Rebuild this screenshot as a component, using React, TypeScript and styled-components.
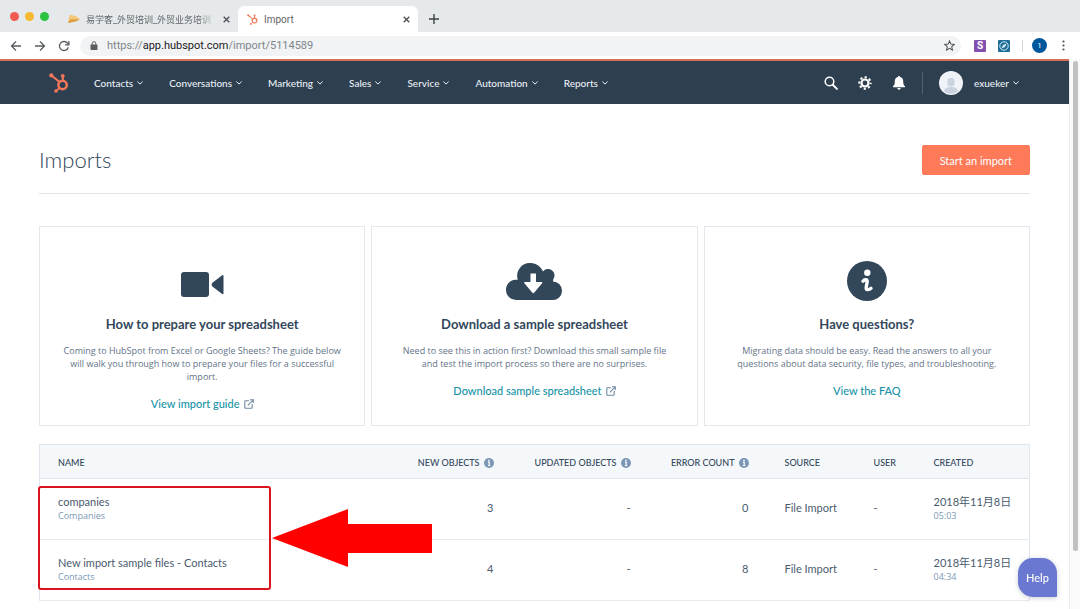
import React from 'react';
import styled, { createGlobalStyle } from 'styled-components';

const ui = 'Lato, "Noto Sans CJK SC", sans-serif';
const smallPrint = '"Open Sans", "Noto Sans CJK SC", sans-serif';
const chromeFont = 'Roboto, "Noto Sans CJK SC", sans-serif';

const GlobalStyle = createGlobalStyle`
  * { box-sizing: border-box; }
  body { margin: 0; font-family: ${ui}; color: #33475b; background: #fff; }
  button { font: inherit; color: inherit; border: 0; padding: 0; background: none; cursor: pointer; }
  a { text-decoration: none; }
  svg { display: block; flex: none; }
`;

const Window = styled.div`
  display: flex;
  flex-direction: column;
  height: 100vh;
  overflow: hidden;
`;

const TabStrip = styled.div`
  display: flex;
  align-items: flex-end;
  height: 32px;
  flex: none;
  padding-left: 10px;
  background: #e5e9eb;
  font-family: ${chromeFont};
  font-size: 10px;
  color: #5f6367;
`;

const Lights = styled.div`
  display: flex;
  gap: 6px;
  height: 32px;
  align-items: center;
`;

const Light = styled.span<{ $color: string }>`
  width: 9px;
  height: 9px;
  border-radius: 50%;
  background: ${(p) => p.$color};
`;

const Tab = styled.div<{ $active?: boolean }>`
  display: flex;
  align-items: center;
  gap: 6px;
  height: 26px;
  width: ${(p) => (p.$active ? 180 : 189)}px;
  padding: 0 8px 0 ${(p) => (p.$active ? 9 : 19)}px;
  border-radius: 6px 6px 0 0;
  background: ${(p) => (p.$active ? '#fff' : 'transparent')};
`;

const TabTitle = styled.span<{ $fade?: boolean }>`
  flex: 1;
  min-width: 0;
  overflow: hidden;
  white-space: nowrap;
  ${(p) => p.$fade && 'font-size: 9px; mask-image: linear-gradient(90deg, #000 85%, transparent);'}
`;

const IconButton = styled.button`
  display: flex;
  align-items: center;
  justify-content: center;
`;

const NewTab = styled(IconButton)`
  width: 32px;
  height: 26px;
`;

const Toolbar = styled.div`
  display: flex;
  align-items: center;
  height: 27px;
  flex: none;
  padding: 0 15px 0 9px;
  background: #fff;
  font-family: ${chromeFont};
`;

const NavButtons = styled.div`
  display: flex;
  gap: 10px;
  margin-right: 9px;
`;

const AddressBar = styled.div`
  flex: 1;
  display: flex;
  align-items: center;
  gap: 9px;
  height: 20px;
  padding: 0 6px 0 10px;
  border-radius: 10px;
  background: #f1f3f4;
`;

const Url = styled.span`
  flex: 1;
  font-size: 11px;
  color: #80868b;
  b { font-weight: 400; color: #202124; }
`;

const Extensions = styled.div`
  display: flex;
  align-items: center;
  gap: 12px;
  margin-left: 13px;
`;

const Badge = styled.span`
  display: flex;
  align-items: center;
  justify-content: center;
  width: 12px;
  height: 12px;
  border-radius: 1px;
  background: #8450b0;
  color: #fff;
  font-size: 10px;
  font-weight: 700;
`;

const ProfileArea = styled.div`
  display: flex;
  align-items: center;
  gap: 9px;
  margin-right: 3px;
`;

const Profile = styled(IconButton)`
  width: 15px;
  height: 15px;
  border-radius: 50%;
  background: #01579b;
  color: #fff;
  font-size: 8px;
`;

const Divider = styled.span<{ $h: number; $color: string }>`
  width: 1px;
  height: ${(p) => p.$h}px;
  background: ${(p) => p.$color};
`;

const Viewport = styled.div`
  flex: 1;
  min-height: 0;
  display: flex;
`;

const Page = styled.div`
  flex: 1;
  min-width: 0;
  overflow: hidden;
`;

const Scrollbar = styled.div`
  width: 11px;
  padding: 2px 2px 0 3px;
  background: #fafafa;
  border-left: 1px solid #ececec;
`;

const Thumb = styled.div`
  height: 490px;
  max-height: 90%;
  border-radius: 3px;
  background: #c1c1c1;
`;

const GlobalNav = styled.nav`
  display: flex;
  align-items: center;
  height: 45px;
  padding: 0 50px 0 49px;
  border-top: 2px solid #d9705e;
  background: #2e3f50;
  color: #eaf0f6;
  font-size: 10px;
  font-weight: 500;
`;

const Menu = styled.div`
  flex: 1;
  display: flex;
  gap: 26px;
  margin-left: 25px;
`;

const MenuButton = styled.button`
  display: flex;
  align-items: center;
  gap: 4px;
  white-space: nowrap;
`;

const Tools = styled.div`
  display: flex;
  align-items: center;
  gap: 16px;
`;

const ToolIcons = styled.div`
  display: flex;
  align-items: center;
  gap: 20px;
`;

const Account = styled.div`
  display: flex;
  align-items: center;
  gap: 11px;
`;

const Main = styled.main`
  padding: 41px 39px 0;
`;

const Header = styled.header`
  display: flex;
  align-items: center;
  justify-content: space-between;
  padding-bottom: 18px;
  border-bottom: 1px solid #dfe3eb;
  margin-bottom: 32px;
`;

const Title = styled.h1`
  margin: 0;
  font-size: 22px;
  line-height: 30px;
  font-weight: 300;
`;

const Primary = styled.button`
  height: 30px;
  padding: 0 18px;
  border-radius: 2px;
  background: #ff7a59;
  color: #fff;
  font-size: 11px;
`;

const Cards = styled.section`
  display: grid;
  grid-template-columns: repeat(3, 1fr);
  gap: 6px;
  margin-bottom: 18px;
`;

const Card = styled.article`
  display: flex;
  flex-direction: column;
  align-items: center;
  min-height: 200px;
  padding: 31px 20px 0;
  border: 1px solid #e3e7ee;
  text-align: center;
`;

const CardIcon = styled.div`
  display: flex;
  align-items: center;
  height: 46px;
`;

const CardTitle = styled.h2`
  margin: 11px 0;
  font-size: 13px;
  line-height: 18px;
  font-weight: 700;
`;

const CardText = styled.p`
  margin: 0 0 14px;
  font-family: ${smallPrint};
  font-size: 9px;
  line-height: 13px;
  color: #637387;
`;

const CardLink = styled.a`
  display: flex;
  align-items: center;
  gap: 4px;
  font-size: 11px;
  line-height: 14px;
  font-weight: 500;
  color: #1793a6;
`;

const TableWrap = styled.section`
  position: relative;
`;

const Table = styled.table`
  width: 100%;
  table-layout: fixed;
  border-collapse: collapse;
  border: 1px solid #dfe6ee;
  font-size: 11px;
`;

const Col = styled.col<{ $w?: number }>`
  width: ${(p) => (p.$w ? `${p.$w}px` : 'auto')};
`;

const Th = styled.th`
  height: 34px;
  padding: 2px 18px 0;
  background: #f5f8fa;
  border-bottom: 1px solid #dfe6ee;
  font-size: 9px;
  font-weight: 500;
  text-align: left;
  white-space: nowrap;
`;

const HeadLabel = styled.span<{ $right?: boolean }>`
  display: flex;
  align-items: center;
  justify-content: ${(p) => (p.$right ? 'flex-end' : 'flex-start')};
  gap: 4px;
`;

const Td = styled.td<{ $right?: boolean }>`
  height: 61px;
  padding: 0 18px 2px;
  border-bottom: 1px solid #e6ebf1;
  line-height: 14px;
  color: #4a5b6e;
  text-align: ${(p) => (p.$right ? 'right' : 'left')};
  white-space: nowrap;
`;

const Sub = styled.div`
  font-family: ${smallPrint};
  font-size: 9px;
  line-height: 13px;
  color: #7c98b6;
`;

const Highlight = styled.div`
  position: absolute;
  left: -1px;
  top: 42px;
  width: 233px;
  height: 104px;
  border: 2px solid #d9141e;
  border-radius: 3px;
`;

const Arrow = styled.svg`
  position: absolute;
  left: 233px;
  top: 65px;
`;

const Help = styled.button`
  position: fixed;
  right: 23px;
  bottom: 12px;
  width: 39px;
  height: 39px;
  border-radius: 15px 15px 1px 15px;
  background: #6a78d1;
  color: #fff;
  font-size: 11px;
  font-weight: 500;
  box-shadow: 0 1px 5px rgba(45, 62, 80, 0.25);
`;

const Chevron = () => (
  <svg width="6" height="4" viewBox="0 0 6 4" fill="none" stroke="currentColor" strokeWidth="1" strokeLinecap="round" aria-hidden>
    <path d="M.6.8 3 3.1 5.4.8" />
  </svg>
);

const Sprocket = ({ size, color }: { size: number; color: string }) => (
  <svg width={size} height={size} viewBox="0 0 20 20" fill="none" stroke={color} aria-hidden>
    <circle cx="13.6" cy="12" r="4.2" strokeWidth="2.5" />
    <path d="M13.8 7.4V3.2" strokeWidth="2" />
    <path d="M10.4 8.8 2.6 2.7" strokeWidth="2" />
    <path d="M10.4 15.1 7.2 18" strokeWidth="1.7" />
    <g fill={color} stroke="none">
      <circle cx="13.8" cy="2.8" r="1.9" />
      <circle cx="2.3" cy="2.4" r="2.1" />
      <circle cx="7" cy="18" r="1.8" />
    </g>
  </svg>
);

const Close = () => (
  <svg width="7" height="7" viewBox="0 0 7 7" stroke="#4b4f53" strokeWidth="1.3" aria-hidden>
    <path d="m.7.7 5.6 5.6M6.3.7.7 6.3" />
  </svg>
);

const InfoDot = () => (
  <svg width="10" height="10" viewBox="0 0 10 10" aria-hidden>
    <circle cx="5" cy="5" r="5" fill="#7c98b6" />
    <circle cx="5" cy="2.6" r=".9" fill="#fff" />
    <path d="M4 4.4h1.2v3M3.900 7.5h2.4" fill="none" stroke="#fff" strokeWidth="1.1" />
  </svg>
);

const External = () => (
  <svg width="10" height="10" viewBox="0 0 10 10" fill="none" stroke="#6f88a3" strokeWidth="1.1" aria-hidden>
    <path d="M5 1.8H1.6a.8.8 0 0 0-.8.8v5.8c0 .5.3.8.8.8h5.8c.5 0 .8-.3.8-.8V5M6 .8h3.3v3.3M9 1.1 3.8 6.3" />
  </svg>
);

const Video = () => (
  <svg width="43" height="31" viewBox="0 -6 43 31" fill="#33475b" aria-hidden>
    <rect width="28" height="25" rx="3" />
    <path d="M41.2 3.2c.8-.5 1.3-.2 1.3.6v17.6c0 .8-.5 1.1-1.3.6l-9.5-7.2c-1.4-1.2-1.4-3.2 0-4.4z" />
  </svg>
);

const Cloud = () => (
  <svg width="56" height="37" viewBox="0 0 56 37" aria-hidden>
    <path
      fill="#33475b"
      d="M10 37a10 10 0 0 1-10-10.300 10 10 0 0 1 11.800-9.900A12.800 12.800 0 0 1 24.800 0c5.400 0 10.300 3.600 12.200 8.600a6.200 6.200 0 0 1 10.300 7.400 6 6 0 0 1-.4 2.400A9.300 9.300 0 0 1 46.500 37z"
    />
    <path fill="#fff" d="M24.500 10.500h5.500v8.500h5.500c.8 0 1.100.6.6 1.200l-8 9.600c-.5.6-1.200.6-1.700 0l-8-9.600c-.5-.6-.2-1.200.6-1.200h5.500z" />
  </svg>
);

const Info = () => (
  <svg width="40" height="40" viewBox="0 0 40 40" aria-hidden>
    <circle cx="20" cy="20" r="20" fill="#33475b" />
    <circle cx="20.3" cy="11.8" r="3.2" fill="#fff" />
    <path d="M16 20.200c1.500-2 4.600-2 4.200.6l-1 5.600c-.4 2.600 2.600 2.900 4.800.9" fill="none" stroke="#fff" strokeWidth="3.4" strokeLinecap="round" />
  </svg>
);

const Gear = () => (
  <svg width="14" height="14" viewBox="0 0 14 14" fill="none" stroke="#fff" aria-hidden>
    <circle cx="7" cy="7" r="3.5" strokeWidth="2.2" />
    <circle cx="7" cy="7" r="5.7" strokeWidth="2" strokeDasharray="2.24 2.24" strokeDashoffset="1.12" />
  </svg>
);

const Avatar = () => (
  <svg width="24" height="24" viewBox="0 0 24 24" aria-hidden>
    <circle cx="12" cy="12" r="12" fill="#eff2f7" />
    <rect x="8.5" y="7" width="7" height="8.5" rx="3" fill="#cbd3e0" />
    <path d="M5 20.500c1-4 4-4.500 7-4.500s6 .5 7 4.500a12 12 0 0 1-14 0z" fill="#cbd3e0" />
  </svg>
);

const menus = ['Contacts', 'Conversations', 'Marketing', 'Sales', 'Service', 'Automation', 'Reports'];

const cards = [
  {
    icon: <Video />,
    title: 'How to prepare your spreadsheet',
    lines: ['Coming to HubSpot from Excel or Google Sheets? The guide below', 'will walk you through how to prepare your files for a successful', 'import.'],
    link: 'View import guide',
    external: true,
  },
  {
    icon: <Cloud />,
    title: 'Download a sample spreadsheet',
    lines: ['Need to see this in action first? Download this small sample file', 'and test the import process so there are no surprises.'],
    link: 'Download sample spreadsheet',
    external: true,
  },
  {
    icon: <Info />,
    title: 'Have questions?',
    lines: ['Migrating data should be easy. Read the answers to all your', 'questions about data security, file types, and troubleshooting.'],
    link: 'View the FAQ',
    external: false,
  },
];

const columns = [
  { label: 'NAME' },
  { label: 'NEW OBJECTS', w: 114, right: true },
  { label: 'UPDATED OBJECTS', w: 137, right: true },
  { label: 'ERROR COUNT', w: 118, right: true },
  { label: 'SOURCE', w: 89 },
  { label: 'USER', w: 60 },
  { label: 'CREATED', w: 114 },
];

const rows = [
  { name: 'companies', type: 'Companies', created: 3, errors: 0, time: '05:03' },
  { name: 'New import sample files - Contacts', type: 'Contacts', created: 4, errors: 8, time: '04:34' },
];

export default function App() {
  return (
    <Window>
      <GlobalStyle />
      <TabStrip>
        <Lights>
          <Light $color="#f25a52" />
          <Light $color="#f5b932" />
          <Light $color="#2ac23f" />
        </Lights>
        <Tab>
          <svg width="12" height="8" viewBox="0 0 12 8" aria-hidden>
            <path d="M1.500 0C5-.2 10 1.500 12 4.500L7.500 6 0 8z" fill="#f3c777" />
            <path d="M0 8 2 4.500 12 4.500 7.500 6.500z" fill="#dc9c3c" />
          </svg>
          <TabTitle $fade>易学客_外贸培训_外贸业务培训</TabTitle>
          <IconButton aria-label="Close tab"><Close /></IconButton>
        </Tab>
        <Tab $active>
          <Sprocket size={11} color="#f08468" />
          <TabTitle>Import</TabTitle>
          <IconButton aria-label="Close tab"><Close /></IconButton>
        </Tab>
        <NewTab aria-label="New tab">
          <svg width="10" height="10" viewBox="0 0 10 10" stroke="#3c4043" strokeWidth="1.4" aria-hidden>
            <path d="M5 0v10M0 5h10" />
          </svg>
        </NewTab>
      </TabStrip>

      <Toolbar>
        <NavButtons>
          <IconButton aria-label="Back">
            <svg width="14" height="12" viewBox="0 0 14 12" fill="none" stroke="#5a5e62" strokeWidth="1.3" aria-hidden>
              <path d="M12 6H3M7 1.500 2.500 6 7 10.500" />
            </svg>
          </IconButton>
          <IconButton aria-label="Forward">
            <svg width="14" height="12" viewBox="0 0 14 12" fill="none" stroke="#5a5e62" strokeWidth="1.3" aria-hidden>
              <path d="M2 6h9M7 1.500 11.500 6 7 10.500" />
            </svg>
          </IconButton>
          <IconButton aria-label="Reload">
            <svg width="14" height="12" viewBox="0 0 14 12" fill="none" stroke="#5a5e62" strokeWidth="1.3" aria-hidden>
              <path d="M11.300 7.200A4.500 4.500 0 1 1 10.500 3.200L11.500 4.500M11.900 1v3.900H8" />
            </svg>
          </IconButton>
        </NavButtons>
        <AddressBar>
          <svg width="8" height="9" viewBox="0 0 8 9" aria-hidden>
            <rect x=".5" y="3.5" width="7" height="5.5" rx=".8" fill="#5a5e62" />
            <path d="M2.200 4V2.500a1.800 1.800 0 0 1 3.600 0V4" fill="none" stroke="#5a5e62" />
          </svg>
          <Url>https://<b>app.hubspot.com</b>/import/5114589</Url>
          <IconButton aria-label="Bookmark">
            <svg width="11" height="11" viewBox="0 0 24 24" fill="none" stroke="#4b4f53" strokeWidth="2.2" aria-hidden>
              <path d="m12 2 3 7 7.500.7-5.700 5 1.700 7.300L12 18.100 5.500 22l1.700-7.300-5.700-5L9 9z" />
            </svg>
          </IconButton>
        </AddressBar>
        <Extensions>
          <Badge>S</Badge>
          <svg width="12" height="12" viewBox="0 0 12 12" aria-hidden>
            <rect width="12" height="12" rx="1" fill="#1d6d96" />
            <circle cx="6" cy="6" r="4.2" fill="none" stroke="#d4ebf5" />
            <path d="M8.500 3.500 7 7 3.500 8.500 5 5z" fill="#d4ebf5" />
          </svg>
          <ProfileArea>
            <Divider $h={12} $color="#d5d9dd" />
            <Profile aria-label="Profile">1</Profile>
          </ProfileArea>
          <IconButton aria-label="Browser menu">
            <svg width="3" height="11" viewBox="0 0 3 11" fill="#4b4f53" aria-hidden>
              <circle cx="1.5" cy="1.5" r="1.1" />
              <circle cx="1.5" cy="5.5" r="1.1" />
              <circle cx="1.5" cy="9.5" r="1.1" />
            </svg>
          </IconButton>
        </Extensions>
      </Toolbar>

      <Viewport>
        <Page>
          <GlobalNav>
            <Sprocket size={20} color="#f5785a" />
            <Menu>
              {menus.map((m) => (
                <MenuButton key={m}>{m}<Chevron /></MenuButton>
              ))}
            </Menu>
            <Tools>
              <ToolIcons>
                <IconButton aria-label="Search">
                  <svg width="14" height="14" viewBox="0 0 14 14" fill="none" stroke="#fff" aria-hidden>
                    <circle cx="5.5" cy="5.5" r="4.3" strokeWidth="1.5" />
                    <path d="m8.800 8.800 4.100 4.100" strokeWidth="2" strokeLinecap="round" />
                  </svg>
                </IconButton>
                <IconButton aria-label="Settings"><Gear /></IconButton>
                <IconButton aria-label="Notifications">
                  <svg width="14" height="14" viewBox="0 0 14 14" fill="#fff" aria-hidden>
                    <path d="M7 0c.6 0 1 .4 1.100 1 2 .5 3.100 2 3.100 4.200 0 3 .5 4 1.800 5.100v.9H1v-.9c1.300-1.100 1.800-2.100 1.800-5.100C2.800 3 3.900 1.500 5.900 1 6 .4 6.400 0 7 0zM5.300 12h3.400a1.700 1.700 0 0 1-3.400 0z" />
                  </svg>
                </IconButton>
              </ToolIcons>
              <Divider $h={22} $color="#506275" />
              <Account>
                <Avatar />
                <MenuButton>exueker<Chevron /></MenuButton>
              </Account>
            </Tools>
          </GlobalNav>

          <Main>
            <Header>
              <Title>Imports</Title>
              <Primary>Start an import</Primary>
            </Header>

            <Cards>
              {cards.map((c) => (
                <Card key={c.title}>
                  <CardIcon>{c.icon}</CardIcon>
                  <CardTitle>{c.title}</CardTitle>
                  <CardText>
                    {c.lines.map((l, i) => (
                      <React.Fragment key={l}>{i > 0 && <br />}{l}</React.Fragment>
                    ))}
                  </CardText>
                  <CardLink href="#">{c.link}{c.external && <External />}</CardLink>
                </Card>
              ))}
            </Cards>

            <TableWrap>
              <Table>
                <colgroup>
                  {columns.map((c) => <Col key={c.label} $w={c.w} />)}
                </colgroup>
                <thead>
                  <tr>
                    {columns.map((c) => (
                      <Th key={c.label} scope="col">
                        <HeadLabel $right={c.right}>{c.label}{c.right && <InfoDot />}</HeadLabel>
                      </Th>
                    ))}
                  </tr>
                </thead>
                <tbody>
                  {rows.map((r) => (
                    <tr key={r.name}>
                      <Td>{r.name}<Sub>{r.type}</Sub></Td>
                      <Td $right>{r.created}</Td>
                      <Td $right>-</Td>
                      <Td $right>{r.errors}</Td>
                      <Td>File Import</Td>
                      <Td>-</Td>
                      <Td>2018年11月8日<Sub>{r.time}</Sub></Td>
                    </tr>
                  ))}
                </tbody>
              </Table>
              <Highlight />
              <Arrow width="160" height="58" viewBox="0 0 160 58" aria-hidden>
                <path d="M0 29 76 0v15h84v29H76v14z" fill="#fe0000" />
              </Arrow>
            </TableWrap>
          </Main>
        </Page>
        <Scrollbar><Thumb /></Scrollbar>
      </Viewport>
      <Help>Help</Help>
    </Window>
  );
}
